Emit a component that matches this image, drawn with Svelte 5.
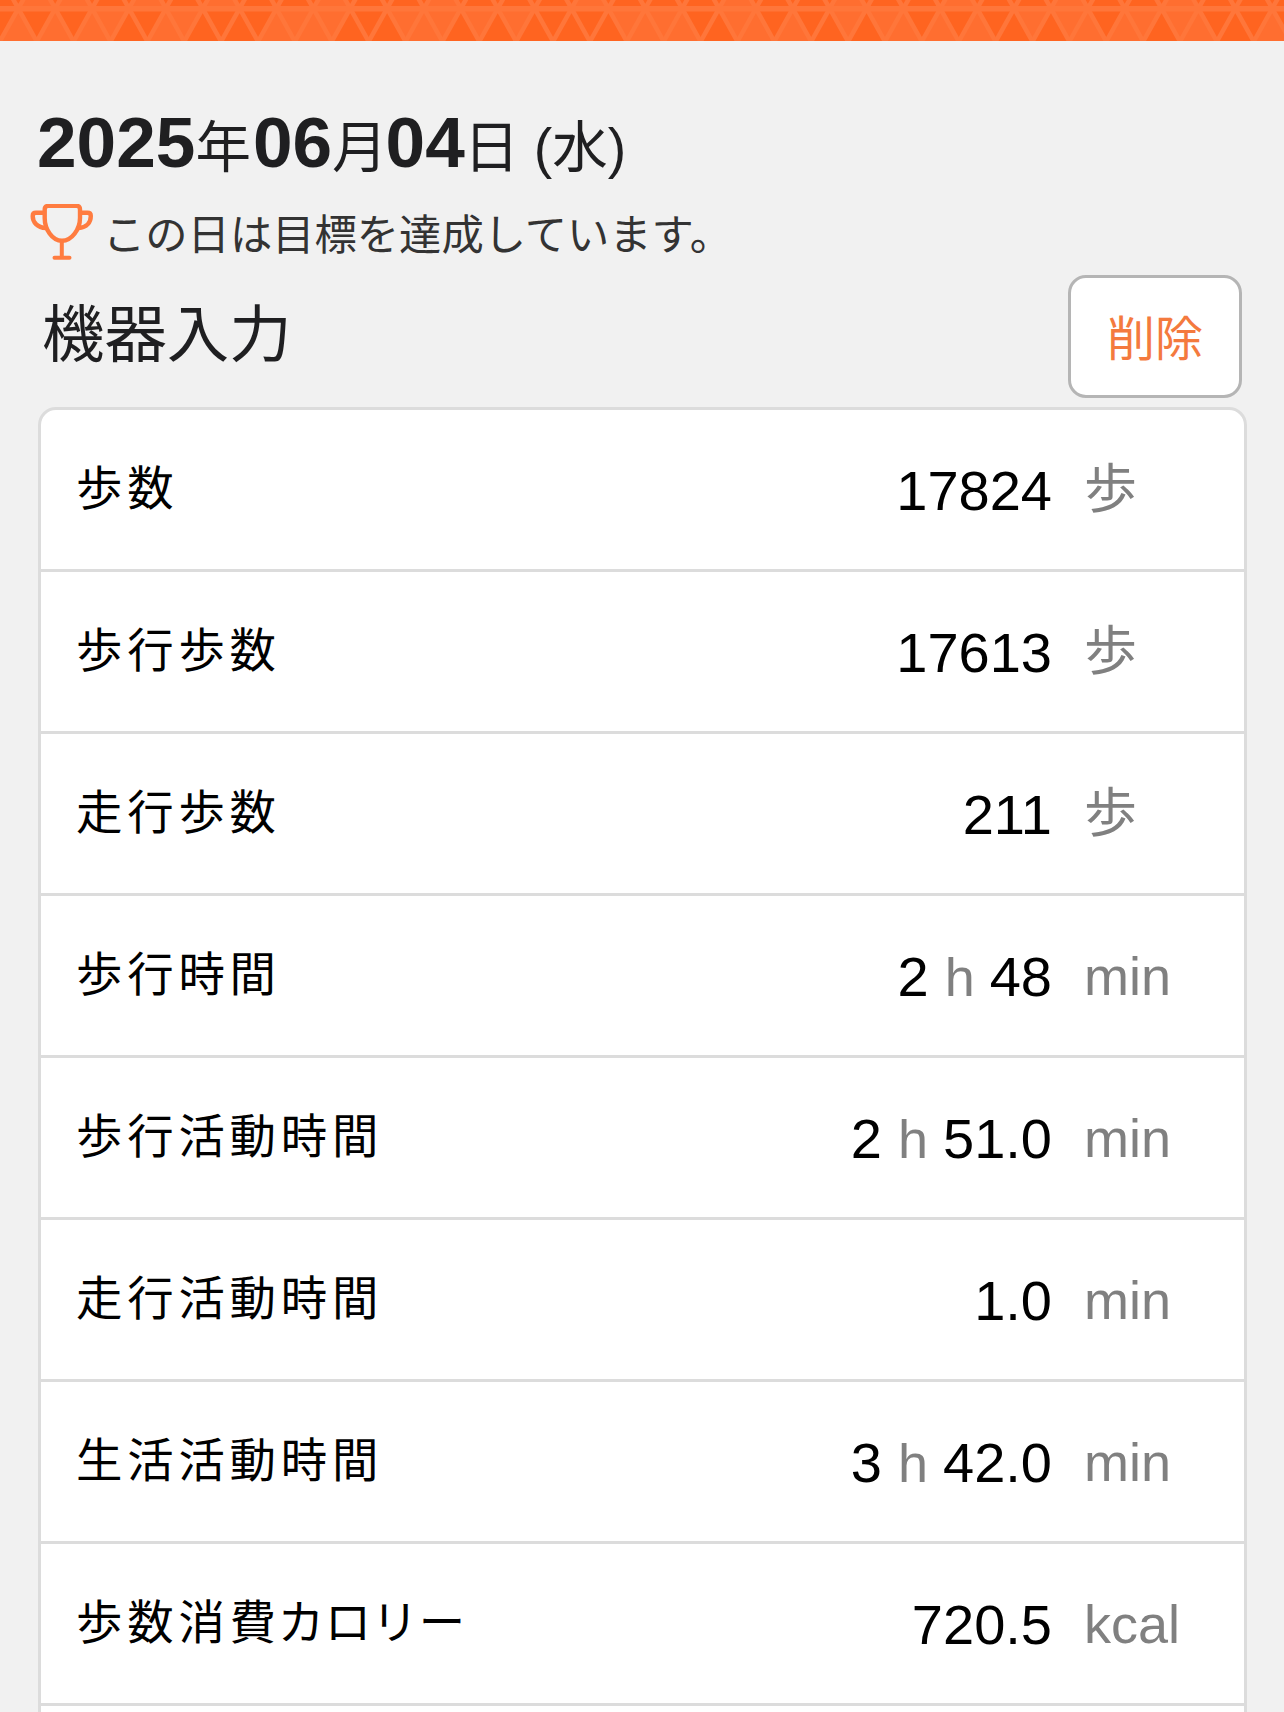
<script>
	const rows = [
		{ label: '歩数', value: '17824', unit: '歩' },
		{ label: '歩行歩数', value: '17613', unit: '歩' },
		{ label: '走行歩数', value: '211', unit: '歩' },
		{ label: '歩行時間', hours: '2', value: '48', unit: 'min' },
		{ label: '歩行活動時間', hours: '2', value: '51.0', unit: 'min' },
		{ label: '走行活動時間', value: '1.0', unit: 'min' },
		{ label: '生活活動時間', hours: '3', value: '42.0', unit: 'min' },
		{ label: '歩数消費', kana: 'カロリー', value: '720.5', unit: 'kcal' },
		{ label: '', value: '', unit: '' }
	];

	// banner pattern: one character per triangle, d = dark, l = light
	const up = 'dllldlddllddldddddlldllddlllddlldldl';
	const down = 'dddldlddlldllllddlldlddlldddlldlldd';
	const upper = 'dlldldlddlddldddldddlddlddlddlddlddd';
	const step = 36.88;
	const tops = Array.from({ length: 36 }, (_, i) => 18.3 + (i - 1) * step);
	const fill = (c) => (c === 'l' ? '#ff6e30' : '#ff6420');
</script>

<div class="page">
	<header class="banner">
		<svg width="1284" height="41" viewBox="0 0 1284 41">
			<rect width="1284" height="41" fill="#ff6420" />
			{#each tops as x, i}
				<path d="M{x} 8.5l{step / 2} 33h{-step}z" fill={fill(up[i])} />
				<path d="M{x} 8.5h{step}l{-step / 2} 33z" fill={fill(down[i])} />
				<path d="M{x} 8.5h{step}l{-step / 2} -33z" fill={fill(upper[i])} />
			{/each}
			<g fill="none" stroke="#ff763a" stroke-width="4.6">
				{#each tops as x}
					<path d="M{x - 9} -7.6L{x + step / 2} 41.5M{x + 9} -7.6L{x - step / 2} 41.5" />
				{/each}
				<path d="M0 8.8h1284" stroke-width="5.5" />
			</g>
		</svg>
	</header>

	<main>
		<h1><b>2025</b>年<b class="month">06</b>月<b class="day">04</b>日 (水)</h1>

		<p class="goal">
			<svg class="trophy" width="64" height="58" viewBox="0 0 64 58" fill="none" stroke="#ff7c40" stroke-width="4.4">
				<path d="M18.5 1.9H46.5Q50 1.9 50 5.5V14C50 25 42 36.8 32 36.8S14.7 25 14.7 14V5.5Q14.7 1.9 18.5 1.9Z" />
				<path d="M14.7 8.8H6Q2.7 8.8 2.7 12C2.7 18 7 23.6 16 24M50 8.8H57.5Q60.8 8.8 60.8 12C60.8 18 57 23.6 48.5 24" />
				<path d="M31.8 37V53.5M24.5 53.7H39.5" stroke-width="4" stroke-linecap="round" />
			</svg>
			<span>この日は目標を達成しています。</span>
		</p>

		<div class="title-row">
			<h2>機器入力</h2>
			<button type="button">削除</button>
		</div>

		<ul class="card">
			{#each rows as row}
				<li>
					<span class="label">{row.label}{#if row.kana}<span class="kana">{row.kana}</span>{/if}</span>
					<span class="value">{#if row.hours}{row.hours}<small>h</small>{/if}{row.value}</span>
					<span class="unit" class:kanji={row.unit === '歩'}>{row.unit}</span>
				</li>
			{/each}
		</ul>
	</main>
</div>

<style>
	:global(body) {
		margin: 0;
		background: #f1f1f1;
	}

	.page {
		height: 1712px;
		overflow: hidden;
		background: #f1f1f1;
		font-family: 'Liberation Sans', 'Noto Sans CJK JP', sans-serif;
		color: #1f1f21;
	}

	.banner,
	.banner svg {
		display: block;
		height: 41px;
	}

	main {
		padding: 60px 37px 0 38px;
	}

	h1 {
		height: 84px;
		margin: 0 0 0 -1px;
		font-size: 55.5px;
		font-weight: 400;
		line-height: 84px;
		white-space: nowrap;
		word-spacing: -1px;
	}

	h1 b {
		font-size: 71.2px;
	}

	.month {
		margin-left: 2px;
	}

	.day {
		margin: 0 -1px 0 -2px;
	}

	.goal {
		display: flex;
		align-items: center;
		gap: 9px;
		height: 58px;
		margin: 19px 0 0 -8px;
		font-size: 42.3px;
		line-height: 58px;
		color: #333;
	}

	.goal span {
		padding-top: 6px;
	}

	.title-row {
		display: flex;
		justify-content: space-between;
		align-items: flex-start;
		height: 132px;
		margin-top: 13px;
		padding: 0 5px 0 4px;
	}

	h2 {
		margin: 13px 0 0;
		font-size: 62.4px;
		font-weight: 400;
		line-height: 96px;
	}

	button {
		box-sizing: border-box;
		width: 174px;
		height: 123px;
		margin: 0;
		padding: 0 0 4px;
		border: 3px solid #b5b5b5;
		border-radius: 18px;
		background: #fff;
		font-family: inherit;
		font-size: 48px;
		color: #f47a3e;
	}

	.card {
		margin: 0;
		padding: 0;
		list-style: none;
		border: 3px solid #dcdcdc;
		border-radius: 18px;
		background: #fff;
		color: #000;
	}

	li {
		box-sizing: border-box;
		display: flex;
		align-items: center;
		height: 162px;
		padding-left: 35px;
		border-bottom: 3px solid #dcdcdc;
	}

	.label {
		flex: 1;
		padding-bottom: 10px;
		font-size: 46.4px;
		letter-spacing: 4.8px;
	}

	.kana {
		margin-left: -3px;
		letter-spacing: 0.6px;
	}

	.value {
		padding-top: 2px;
		font-size: 56px;
	}

	small {
		margin: 0 15px 0 16px;
		font-size: 54px;
		color: #808080;
	}

	.unit {
		width: 160px;
		margin-left: 32px;
		font-size: 54px;
		color: #808080;
	}

	.unit.kanji {
		padding-bottom: 9px;
		font-size: 53px;
	}
</style>
